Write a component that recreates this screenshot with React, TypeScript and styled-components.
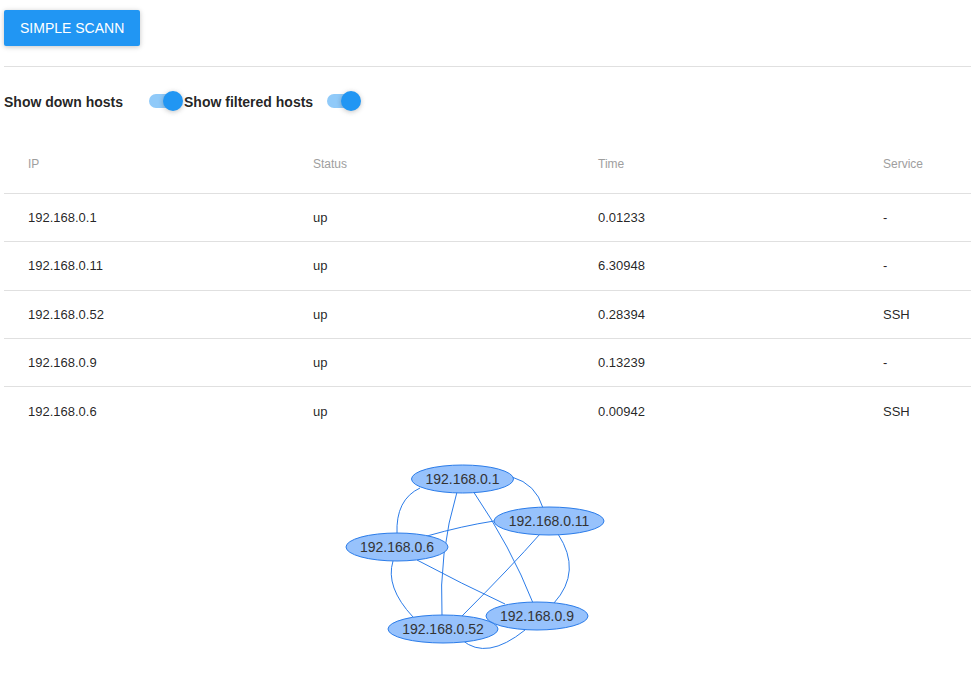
import React from "react";
import styled, { createGlobalStyle } from "styled-components";

const Global = createGlobalStyle`
  html, body { margin: 0; padding: 0; background: #fff; overflow: hidden; }
  body { font-family: "Liberation Sans", Arial, sans-serif; }
  * { box-sizing: border-box; }
`;

const Page = styled.div`
  padding: 10px 0 0 4px;
  width: 971px;
  overflow: hidden;
`;

const ScanButton = styled.button`
  display: block;
  height: 36px;
  padding: 0 16px;
  border: none;
  border-radius: 2px;
  background: #2196f3;
  color: #fff;
  font-family: "Liberation Sans", Arial, sans-serif;
  font-size: 14px;
  text-transform: uppercase;
  box-shadow: 0 1px 6px rgba(0, 0, 0, 0.12), 0 1px 4px rgba(0, 0, 0, 0.12);
  cursor: pointer;
`;

const Divider = styled.hr`
  margin: 20px 0 0 0;
  height: 1px;
  border: none;
  background: #e0e0e0;
`;

const ToggleRow = styled.div`
  display: flex;
  margin-top: 24px;
  height: 20px;
  align-items: center;
`;

const ToggleBlock = styled.label<{ $w: number; $mr: number }>`
  display: flex;
  align-items: center;
  justify-content: space-between;
  width: ${(p) => p.$w}px;
  padding-right: ${(p) => p.$mr}px;
`;

const ToggleLabel = styled.span`
  font-size: 14px;
  font-weight: bold;
  color: rgba(0, 0, 0, 0.87);
  padding-top: 1px;
`;

const Switch = styled.span`
  position: relative;
  width: 36px;
  height: 20px;
  flex-shrink: 0;
`;

const Track = styled.span`
  position: absolute;
  left: 2px;
  top: 3px;
  width: 32px;
  height: 14px;
  border-radius: 30px;
  background: #90caf9;
`;

const Thumb = styled.span`
  position: absolute;
  left: 16px;
  top: 0;
  width: 20px;
  height: 20px;
  border-radius: 50%;
  background: #2196f3;
  box-shadow: 0 1px 6px rgba(0, 0, 0, 0.12), 0 1px 4px rgba(0, 0, 0, 0.12);
`;

const Table = styled.div`
  margin-top: 26px;
  width: 1140px;
`;

const HeaderRow = styled.div`
  display: grid;
  grid-template-columns: repeat(4, 285px);
  height: 57px;
  padding-bottom: 2px;
  align-items: center;
  border-bottom: 1px solid #e0e0e0;
`;

const HeadCell = styled.div`
  padding-left: 24px;
  font-size: 12px;
  color: #9e9e9e;
`;

const BodyRow = styled.div<{ $last?: boolean }>`
  display: grid;
  grid-template-columns: repeat(4, 285px);
  height: 48.25px;
  align-items: center;
  border-bottom: ${(p) => (p.$last ? "none" : "1px solid #e0e0e0")};
`;

const Cell = styled.div`
  padding-left: 24px;
  font-size: 13px;
  color: rgba(0, 0, 0, 0.87);
`;

const GraphSvg = styled.svg`
  display: block;
`;

const rows = [
  ["192.168.0.1", "up", "0.01233", "-"],
  ["192.168.0.11", "up", "6.30948", "-"],
  ["192.168.0.52", "up", "0.28394", "SSH"],
  ["192.168.0.9", "up", "0.13239", "-"],
  ["192.168.0.6", "up", "0.00942", "SSH"],
];

const nodes = [
  { label: "192.168.0.1", cx: 462.5, cy: 479, rx: 51, ry: 14 },
  { label: "192.168.0.11", cx: 549, cy: 521, rx: 55, ry: 14 },
  { label: "192.168.0.6", cx: 397, cy: 547, rx: 51, ry: 14 },
  { label: "192.168.0.9", cx: 537, cy: 616, rx: 51, ry: 14 },
  { label: "192.168.0.52", cx: 443, cy: 629, rx: 55, ry: 14 },
];

const edges = [
  "M420 488 Q395.5 499.5 397 534",
  "M512 477 Q536 484 543 508",
  "M457 492 Q438.5 554 442 616",
  "M473 491 Q511 547 533 603",
  "M494 521 Q462 526 427 536",
  "M540 534 Q511 567 462 616",
  "M558 534 Q582.5 571.5 554 603",
  "M417 560 Q462 584 505 604",
  "M393 561 Q385 587 413 617",
  "M462 640 Q486.5 661 525 630",
];

export default function App() {
  return (
    <>
      <Global />
      <Page>
        <ScanButton>Simple Scann</ScanButton>
        <Divider />
        <ToggleRow>
          <ToggleBlock $w={180} $mr={1}>
            <ToggleLabel>Show down hosts</ToggleLabel>
            <Switch>
              <Track />
              <Thumb />
            </Switch>
          </ToggleBlock>
          <ToggleBlock $w={180} $mr={3}>
            <ToggleLabel>Show filtered hosts</ToggleLabel>
            <Switch>
              <Track />
              <Thumb />
            </Switch>
          </ToggleBlock>
        </ToggleRow>
        <Table>
          <HeaderRow>
            <HeadCell>IP</HeadCell>
            <HeadCell>Status</HeadCell>
            <HeadCell>Time</HeadCell>
            <HeadCell>Service</HeadCell>
          </HeaderRow>
          {rows.map((r, i) => (
            <BodyRow key={r[0]} $last={i === rows.length - 1}>
              {r.map((c, j) => (
                <Cell key={j}>{c}</Cell>
              ))}
            </BodyRow>
          ))}
        </Table>
        <GraphSvg width={967} height={246} viewBox="4 435 967 246">
          {edges.map((d, i) => (
            <path key={i} d={d} fill="none" stroke="#2B7CE9" strokeWidth={1} />
          ))}
          {nodes.map((n) => (
            <g key={n.label}>
              <ellipse cx={n.cx} cy={n.cy} rx={n.rx} ry={n.ry} fill="#97C2FC" stroke="#2B7CE9" strokeWidth={1} />
              <text
                x={n.cx}
                y={n.cy + 5}
                textAnchor="middle"
                fontFamily="'Liberation Sans', Arial, sans-serif"
                fontSize={14}
                fill="#343434"
              >
                {n.label}
              </text>
            </g>
          ))}
        </GraphSvg>
      </Page>
    </>
  );
}
